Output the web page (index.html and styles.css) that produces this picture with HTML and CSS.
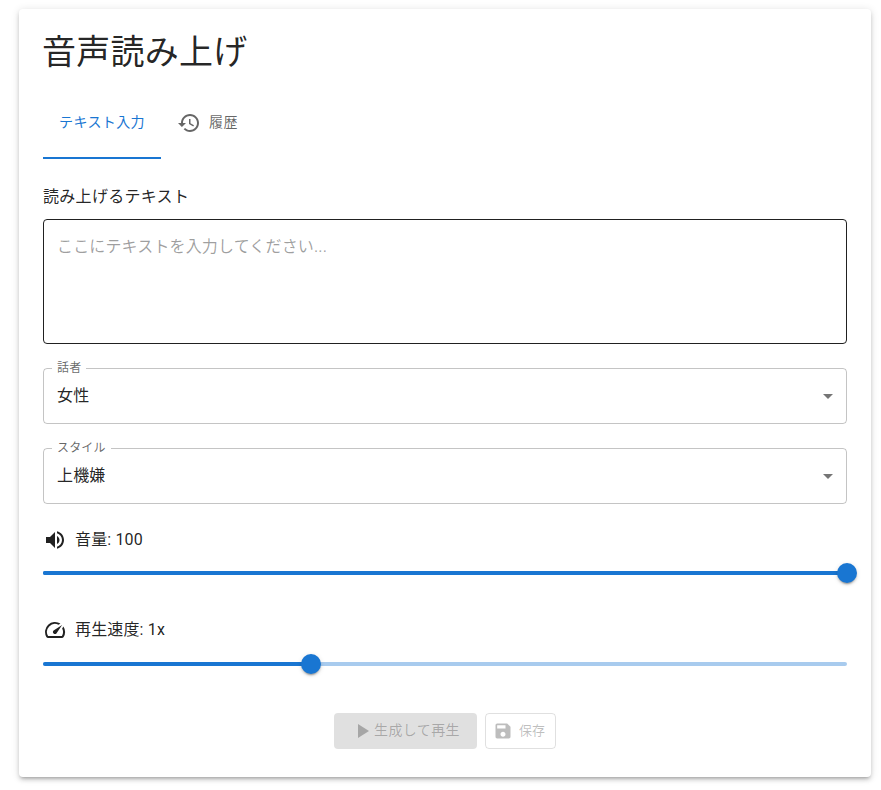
FILE: index.html
```html
<!DOCTYPE html>
<html lang="ja">
<head>
<meta charset="utf-8">
<title>音声読み上げ</title>
<link rel="stylesheet" href="styles.css">
</head>
<body>
<main class="card">
  <h1 class="title">音声読み上げ</h1>
  <div class="tabs">
    <button class="tab tab-active"><span>テキスト入力</span></button>
    <button class="tab">
      <svg class="tab-icon" viewBox="0 0 24 24"><path d="M13 3c-4.97 0-9 4.03-9 9H1l3.89 3.89.07.14L9 12H6c0-3.87 3.13-7 7-7s7 3.13 7 7-3.13 7-7 7c-1.93 0-3.68-.79-4.94-2.06l-1.42 1.42C8.27 19.99 10.51 21 13 21c4.97 0 9-4.03 9-9s-4.03-9-9-9zm-1 5v5l4.28 2.54.72-1.21-3.5-2.08V8H12z"/></svg>
      <span>履歴</span>
    </button>
  </div>
  <label class="field-label">読み上げるテキスト</label>
  <div class="textarea">ここにテキストを入力してください...</div>
  <div class="select">
    <span class="select-label">話者</span>
    <span class="select-value">女性</span>
    <svg class="caret" viewBox="0 0 24 24"><path d="M7 10l5 5 5-5z"/></svg>
  </div>
  <div class="select">
    <span class="select-label">スタイル</span>
    <span class="select-value">上機嫌</span>
    <svg class="caret" viewBox="0 0 24 24"><path d="M7 10l5 5 5-5z"/></svg>
  </div>
  <div class="slider-block">
    <div class="slider-head">
      <svg class="slider-icon" viewBox="0 0 24 24"><path d="M3 9v6h4l5 5V4L7 9H3zm13.5 3c0-1.77-1.02-3.29-2.5-4.03v8.05c1.48-.73 2.5-2.25 2.5-4.02zM14 3.23v2.06c2.89.86 5 3.54 5 6.71s-2.11 5.85-5 6.71v2.06c4.01-.91 7-4.49 7-8.77s-2.99-7.86-7-8.77z"/></svg>
      <span>音量: 100</span>
    </div>
    <div class="slider"><div class="fill" style="width:100%"></div><div class="thumb" style="left:100%"></div></div>
  </div>
  <div class="slider-block slider-block-second">
    <div class="slider-head">
      <svg class="slider-icon" viewBox="0 0 24 24"><path d="M20.38 8.57l-1.23 1.85a8 8 0 0 1-.22 7.58H5.07A8 8 0 0 1 15.58 6.85l1.85-1.23A10 10 0 0 0 3.35 19a2 2 0 0 0 1.72 1h13.85a2 2 0 0 0 1.74-1 10 10 0 0 0-.27-10.44zm-9.79 6.84a2 2 0 0 0 2.83 0l5.66-8.49-8.49 5.66a2 2 0 0 0 0 2.83z"/></svg>
      <span>再生速度: 1x</span>
    </div>
    <div class="slider slider-rail"><div class="fill" style="width:33.33%"></div><div class="thumb" style="left:33.33%"></div></div>
  </div>
  <div class="actions">
    <button class="btn btn-primary" disabled>
      <svg class="btn-icon" viewBox="0 0 24 24"><path d="M8 5v14l11-7z"/></svg>
      <span>生成して再生</span>
    </button>
    <button class="btn btn-outline" disabled>
      <svg class="btn-icon-small" viewBox="0 0 24 24"><path d="M17 3H5c-1.11 0-2 .9-2 2v14c0 1.1.89 2 2 2h14c1.1 0 2-.9 2-2V7l-4-4zm-5 16c-1.66 0-3-1.34-3-3s1.34-3 3-3 3 1.34 3 3-1.34 3-3 3zm3-10H5V5h10v4z"/></svg>
      <span>保存</span>
    </button>
  </div>
</main>
</body>
</html>
```
FILE: styles.css
```css
* { box-sizing: border-box; }
html, body { margin: 0; background: #fff; }
body {
  padding: 9px 10px 13px 19px;
  font-family: Roboto, "Noto Sans CJK JP", sans-serif;
  color: rgba(0,0,0,.87);
}
.card {
  width: 852px;
  height: 768px;
  padding: 24px;
  background: #fff;
  border-radius: 4px;
  box-shadow: 0 3px 3px -2px rgba(0,0,0,.2), 0 3px 4px 0 rgba(0,0,0,.14), 0 1px 8px 0 rgba(0,0,0,.12);
  display: flex;
  flex-direction: column;
}
.title { margin: 0 0 16px; font-size: 34px; font-weight: 400; line-height: 38px; letter-spacing: .25px; text-indent: -1px; }
.tabs { display: flex; height: 72px; }
.tab {
  border: 0; background: none; padding: 0 16px; margin: 0;
  font: inherit; font-size: 14px; letter-spacing: .4px; color: rgba(0,0,0,.6);
  display: flex; align-items: center; gap: 8px;
  height: 72px; padding-bottom: 2px;
}
.tab span { position: relative; top: -1px; display: block; }
.tab-active { color: #1976d2; width: 118px; justify-content: center; border-bottom: 2px solid #1976d2; padding-bottom: 0; }
.tab-icon { width: 24px; height: 24px; fill: rgba(0,0,0,.6); margin-top: 2px; }
.field-label { margin-top: 26px; font-size: 16px; line-height: 24px; letter-spacing: .3px; display: block; }
.textarea {
  margin-top: 10px; height: 125px; border: 1px solid rgba(0,0,0,.87); border-radius: 4px;
  padding: 15px 13px 13px; font-size: 16px; line-height: 24px; letter-spacing: .15px; color: rgba(0,0,0,.38);
}
.select {
  position: relative; margin-top: 24px; height: 56px;
  border: 1px solid rgba(0,0,0,.23); border-radius: 4px;
  display: flex; align-items: center; padding: 0 13px; font-size: 16px; letter-spacing: .15px;
}
.select-label {
  position: absolute; left: 8px; top: -9px; padding: 0 5px; background: #fff;
  font-size: 12px; line-height: 16px; color: rgba(0,0,0,.6);
}
.select-value { line-height: 24px; }
.caret { position: absolute; right: 6px; top: 15px; width: 24px; height: 24px; fill: rgba(0,0,0,.54); }
.slider-block { margin-top: 24px; }
.slider-block-second { margin-top: 43px; }
.slider-head { display: flex; align-items: center; gap: 8px; height: 24px; font-size: 16px; line-height: 24px; letter-spacing: .15px; }
.slider-icon { width: 24px; height: 24px; fill: rgba(0,0,0,.87); }
.slider { position: relative; height: 4px; margin-top: 19px; border-radius: 2px; background: #1976d2; }
.slider-rail { margin-top: 20px; background: rgba(25,118,210,.38); }
.fill { height: 4px; border-radius: 2px; background: #1976d2; }
.thumb {
  position: absolute; top: -8px; width: 20px; height: 20px; margin-left: -10px; border-radius: 50%;
  background: #1976d2;
  box-shadow: 0 3px 1px -2px rgba(0,0,0,.2), 0 2px 2px 0 rgba(0,0,0,.14), 0 1px 5px 0 rgba(0,0,0,.12);
}
.actions { display: flex; justify-content: center; gap: 8px; margin-top: 47px; }
.btn {
  height: 36px; border-radius: 4px; font: inherit; font-size: 14px; letter-spacing: .4px; color: rgba(0,0,0,.26);
  display: flex; align-items: center; margin: 0;
}
.btn-primary { width: 143px; background: rgba(0,0,0,.12); border: 0; padding: 0 0 0 16px; gap: 0; }
.btn-primary span { position: relative; top: -2px; }
.btn-outline { width: 71px; background: none; border: 1px solid rgba(0,0,0,.12); padding: 0 0 0 7px; gap: 6px; font-size: 13px; letter-spacing: 0; }
.btn-outline span { position: relative; top: -2px; }
.btn-icon { width: 24px; height: 24px; fill: rgba(0,0,0,.26); flex: none; }
.btn-icon-small { width: 20px; height: 20px; fill: rgba(0,0,0,.26); flex: none; }
```
